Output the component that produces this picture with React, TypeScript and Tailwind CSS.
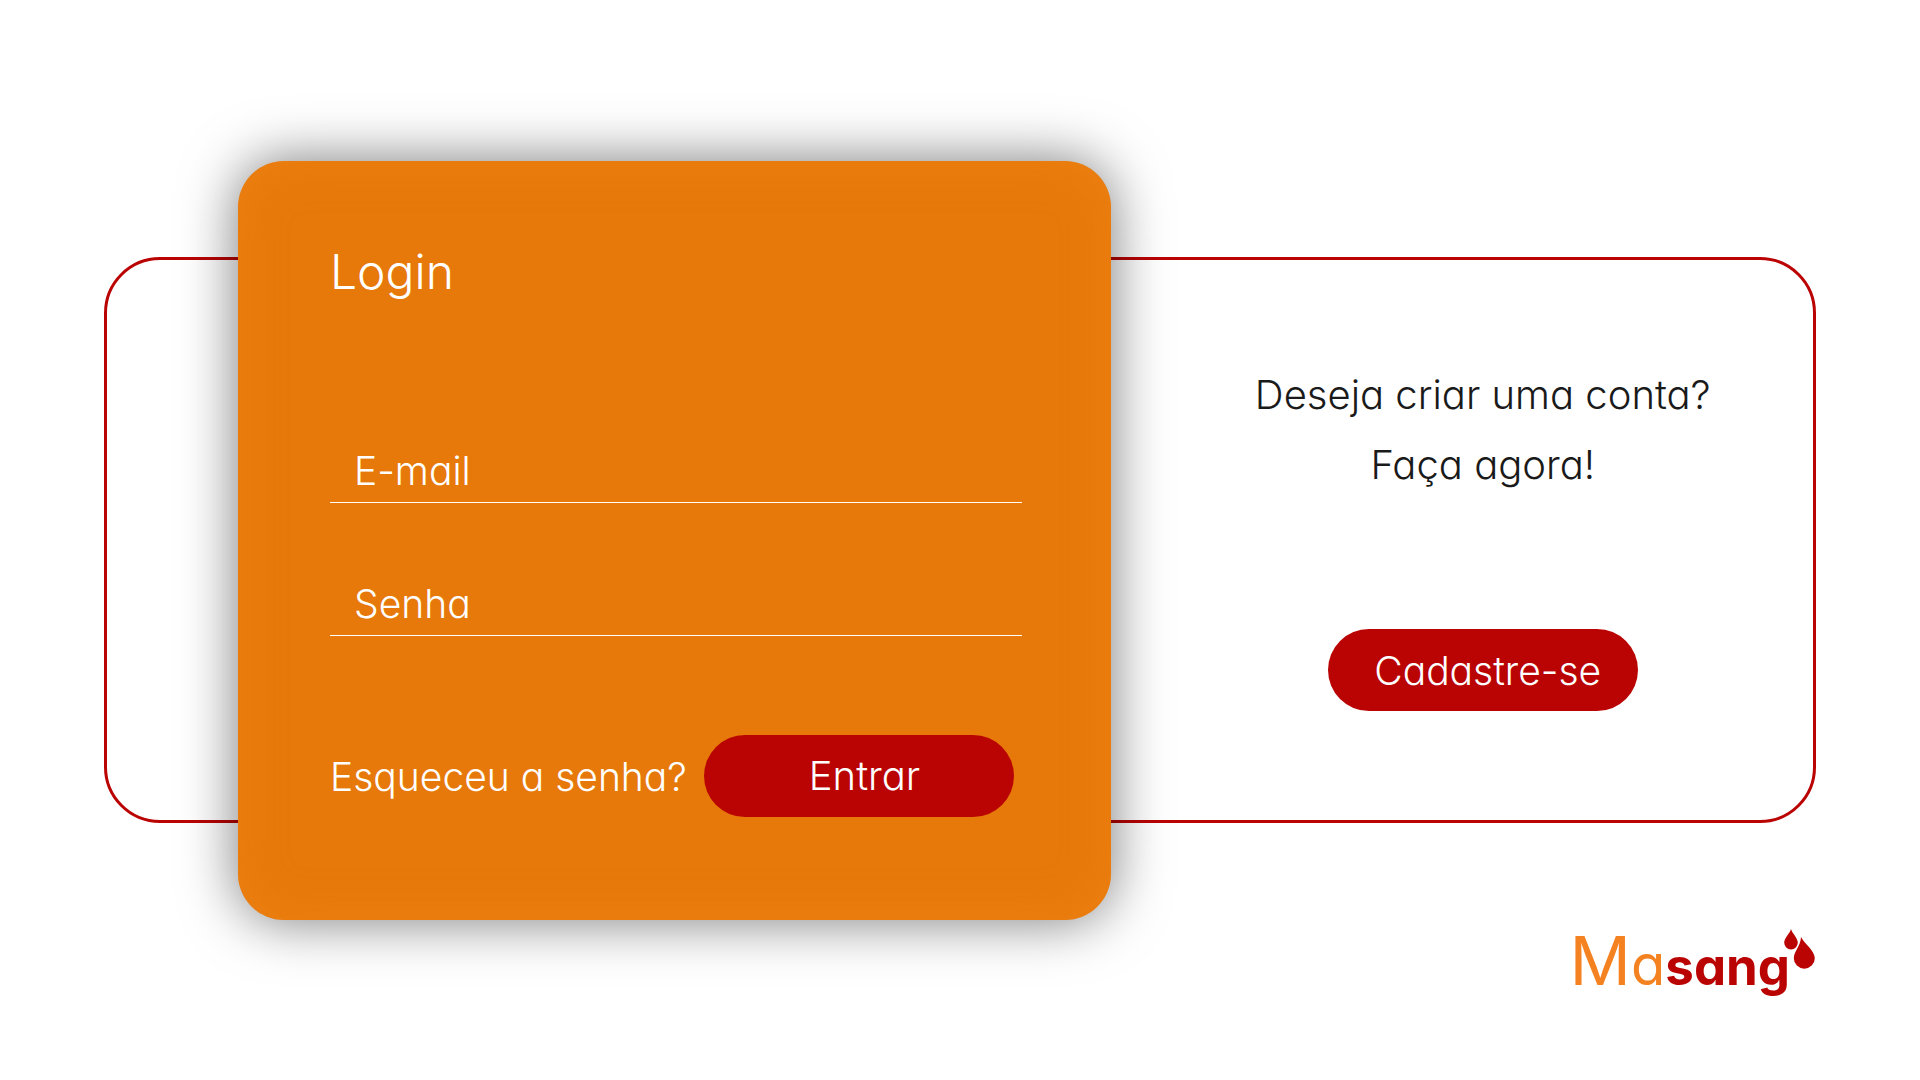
import type { InputHTMLAttributes } from 'react';

type FieldProps = InputHTMLAttributes<HTMLInputElement> & { label: string };

function Field({ label, ...rest }: FieldProps) {
  return (
    <div className="border-b border-white">
      <input
        aria-label={label}
        placeholder={label}
        className="block h-[63px] w-full bg-transparent pl-6 text-[39px] text-white outline-none placeholder:text-white placeholder:opacity-100"
        {...rest}
      />
    </div>
  );
}

function Drops() {
  return (
    <svg viewBox="0 0 31 41" className="absolute top-[9px] right-px h-[41px] w-[31px]" fill="#ba0404" aria-hidden="true">
      <path d="M7 0C8.300 4.600 13.800 9 13.800 13.600A6.800 6.800 0 0 1 .2 13.600C.2 9 5.800 4.600 7 0Z" />
      <path d="M17 8C20.500 15 30.800 21.600 30.800 29.200A10.500 10.500 0 0 1 9.800 29.200C9.800 22.500 16.600 17 17 8Z" />
    </svg>
  );
}

export default function App() {
  return (
    <main className="flex min-h-screen flex-col bg-white px-[104px] pt-[257px] font-[Inter,sans-serif] font-light [font-feature-settings:'cv11']">
      <section className="flex rounded-[56px] border-[3px] border-[#ba0404]">
        <form
          onSubmit={(e) => e.preventDefault()}
          className="-mt-[99px] -mb-[100px] ml-[131px] flex flex-[691] flex-col rounded-[46px] bg-[#e6790a] pr-[89px] pb-[103px] pl-[92px] text-white shadow-[0_0_56px_rgba(0,0,0,0.53),inset_0_0_50px_rgba(255,145,40,0.3)]"
        >
          <h1 className="mt-[81px] text-[48px] leading-[60px]">Login</h1>
          <div className="mt-[137px] flex flex-col gap-[69px]">
            <Field type="email" label="E-mail" />
            <Field type="password" label="Senha" />
          </div>
          <div className="mt-[99px] flex items-center justify-between pr-2">
            <a href="#recuperar" className="pt-0.5 text-[39px] whitespace-nowrap">
              Esqueceu a senha?
            </a>
            <button type="submit" className="h-[82px] w-[310px] shrink-0 rounded-full bg-[#ba0404] pl-3 text-[40px]">
              Entrar
            </button>
          </div>
        </form>
        <div className="flex flex-[660] flex-col items-center pt-[100px] pl-[42px]">
          <p className="text-center text-[40px] leading-[70px] text-[#1a1a1a]">
            Deseja criar uma conta?
            <br />
            Faça agora!
          </p>
          <button type="button" className="mt-[129px] h-[82px] w-[310px] rounded-full bg-[#ba0404] pt-0.5 pl-2.5 text-[39px] text-white">
            Cadastre-se
          </button>
        </div>
      </section>
      <footer className="mt-[97px] flex justify-end">
        <div className="relative flex items-baseline pr-[26px] leading-[80px]">
          <span className="text-[68px] font-normal text-[#f58220]">M</span>
          <span className="text-[56px] font-normal text-[#f58220]">a</span>
          <span className="text-[51px] font-bold text-[#ba0404]">sang</span>
          <Drops />
        </div>
      </footer>
    </main>
  );
}
